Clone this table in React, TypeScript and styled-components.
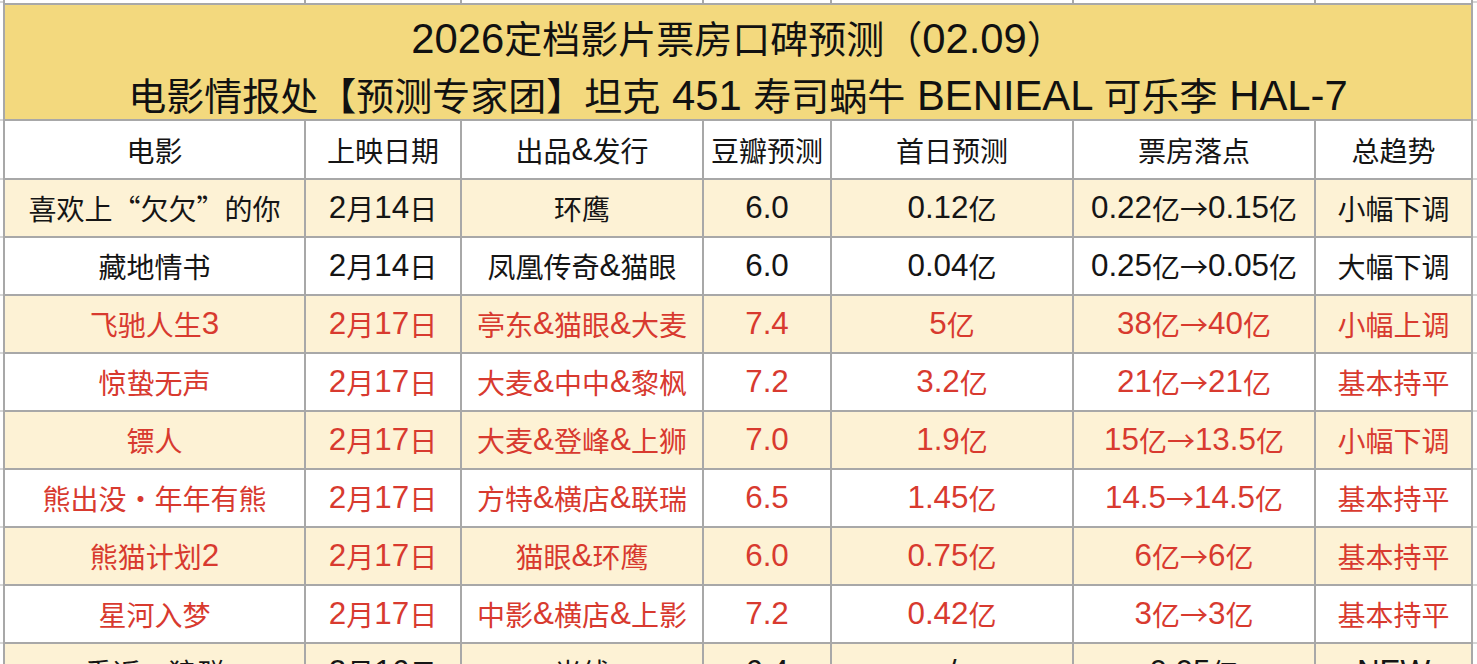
import React from "react";
import styled, { createGlobalStyle } from "styled-components";

const GlobalStyle = createGlobalStyle`
  html, body {
    margin: 0;
    padding: 0;
    background: #ffffff;
    overflow: hidden;
  }
  body {
    font-family: "Liberation Sans", "Noto Sans CJK SC", sans-serif;
    color: #111;
  }
`;

const DARK = "#a8a8a8";
const LIGHT = "#d6d6d6";

const Sheet = styled.div`
  display: grid;
  grid-template-columns: 3px 303px 156px 242px 128px 242px 242px 157px 1fr;
  grid-template-rows: 3px 118px 59px repeat(9, 58px);
  width: 1477px;
`;

const Row = styled.div`
  display: contents;
`;

const Stub = styled.div<{ $line?: "right" | "bottom" | "none" }>`
  box-sizing: border-box;
  background: #ffffff;
  border-right: ${(p) => (p.$line === "right" ? `2px solid ${DARK}` : "none")};
  border-bottom: ${(p) => (p.$line === "bottom" ? `2px solid ${LIGHT}` : "none")};
`;

const TopStub = styled(Stub)<{ $first?: boolean }>`
  border-left: ${(p) => (p.$first ? `2px solid ${DARK}` : "none")};
`;

const Title = styled.div`
  grid-column: 2 / 9;
  box-sizing: border-box;
  background: #f3d97e;
  border: 2px solid ${DARK};
  padding-top: 3px;
  display: flex;
  flex-direction: column;
  align-items: center;
  justify-content: flex-start;
  font-size: 38px;
  line-height: 57px;
  color: #111;
  white-space: nowrap;
  overflow: visible;
`;

const TitleLine = styled.div`
  height: 57px;
`;

const Cell = styled.div<{ $first?: boolean; $cream?: boolean; $red?: boolean }>`
  box-sizing: border-box;
  border-right: 2px solid ${DARK};
  border-bottom: 2px solid ${DARK};
  border-left: ${(p) => (p.$first ? `2px solid ${DARK}` : "none")};
  background: ${(p) => (p.$cream ? "#fdf2d5" : "#ffffff")};
  color: ${(p) => (p.$red ? "#d83a2f" : "#151515")};
  display: flex;
  align-items: center;
  justify-content: center;
  font-size: 28px;
  line-height: 40px;
  white-space: nowrap;
  overflow: hidden;
`;

const Han = styled.span`
  font-family: "Noto Sans CJK SC", sans-serif;
`;

const Latin = styled.span<{ $scale: number; $drop: number }>`
  font-family: "Liberation Sans", sans-serif;
  font-size: ${(p) => p.$scale}em;
  vertical-align: ${(p) => -p.$drop}px;
`;

const HAN_RE = /[\u2014\u2018\u2019\u201c\u201d\u2190-\u21ff\u3000-\u30ff\u3400-\u9fff\uff00-\uffef]/;

function Mixed({ text, scale, drop = 0 }: { text: string; scale: number; drop?: number }) {
  const runs: { han: boolean; s: string }[] = [];
  for (const ch of Array.from(text)) {
    const han = HAN_RE.test(ch);
    const last = runs[runs.length - 1];
    if (last && last.han === han) last.s += ch;
    else runs.push({ han, s: ch });
  }
  return (
    <>
      {runs.map((r, i) =>
        r.han ? (
          <Han key={i}>{r.s}</Han>
        ) : (
          <Latin key={i} $scale={scale} $drop={drop}>
            {r.s}
          </Latin>
        )
      )}
    </>
  );
}

const headers = ["电影", "上映日期", "出品&发行", "豆瓣预测", "首日预测", "票房落点", "总趋势"];

type Movie = { cells: string[]; red: boolean };

const movies: Movie[] = [
  { cells: ["喜欢上“欠欠”的你", "2月14日", "环鹰", "6.0", "0.12亿", "0.22亿→0.15亿", "小幅下调"], red: false },
  { cells: ["藏地情书", "2月14日", "凤凰传奇&猫眼", "6.0", "0.04亿", "0.25亿→0.05亿", "大幅下调"], red: false },
  { cells: ["飞驰人生3", "2月17日", "亭东&猫眼&大麦", "7.4", "5亿", "38亿→40亿", "小幅上调"], red: true },
  { cells: ["惊蛰无声", "2月17日", "大麦&中中&黎枫", "7.2", "3.2亿", "21亿→21亿", "基本持平"], red: true },
  { cells: ["镖人", "2月17日", "大麦&登峰&上狮", "7.0", "1.9亿", "15亿→13.5亿", "小幅下调"], red: true },
  { cells: ["熊出没・年年有熊", "2月17日", "方特&横店&联瑞", "6.5", "1.45亿", "14.5→14.5亿", "基本持平"], red: true },
  { cells: ["熊猫计划2", "2月17日", "猫眼&环鹰", "6.0", "0.75亿", "6亿→6亿", "基本持平"], red: true },
  { cells: ["星河入梦", "2月17日", "中影&横店&上影", "7.2", "0.42亿", "3亿→3亿", "基本持平"], red: true },
  { cells: ["重返・狼群", "2月16日", "光线", "6.4", "/", "0.05亿", "NEW"], red: false },
];

const TITLE_SCALE = 1.1;
const CELL_SCALE = 1.12;

export default function App() {
  return (
    <>
      <GlobalStyle />
      <Sheet>
        <Row>
          <Stub $line="bottom" />
          {headers.map((_, i) => (
            <TopStub key={i} $line="right" $first={i === 0} />
          ))}
          <Stub $line="bottom" />
        </Row>
        <Row>
          <Stub $line="bottom" />
          <Title>
            <TitleLine>
              <Mixed text="2026定档影片票房口碑预测（02.09）" scale={TITLE_SCALE} />
            </TitleLine>
            <TitleLine>
              <Mixed text="电影情报处【预测专家团】坦克 451 寿司蜗牛 BENIEAL 可乐李 HAL-7" scale={TITLE_SCALE} />
            </TitleLine>
          </Title>
          <Stub $line="bottom" />
        </Row>
        <Row>
          <Stub $line="bottom" />
          {headers.map((h, i) => (
            <Cell key={h} $first={i === 0}>
              <Mixed text={h} scale={CELL_SCALE} drop={1} />
            </Cell>
          ))}
          <Stub $line="bottom" />
        </Row>
        {movies.map((m, r) => (
          <Row key={r}>
            <Stub $line="bottom" />
            {m.cells.map((c, i) => (
              <Cell key={i} $first={i === 0} $cream={r % 2 === 0} $red={m.red}>
                <Mixed text={c} scale={CELL_SCALE} drop={1} />
              </Cell>
            ))}
            <Stub $line="bottom" />
          </Row>
        ))}
      </Sheet>
    </>
  );
}
